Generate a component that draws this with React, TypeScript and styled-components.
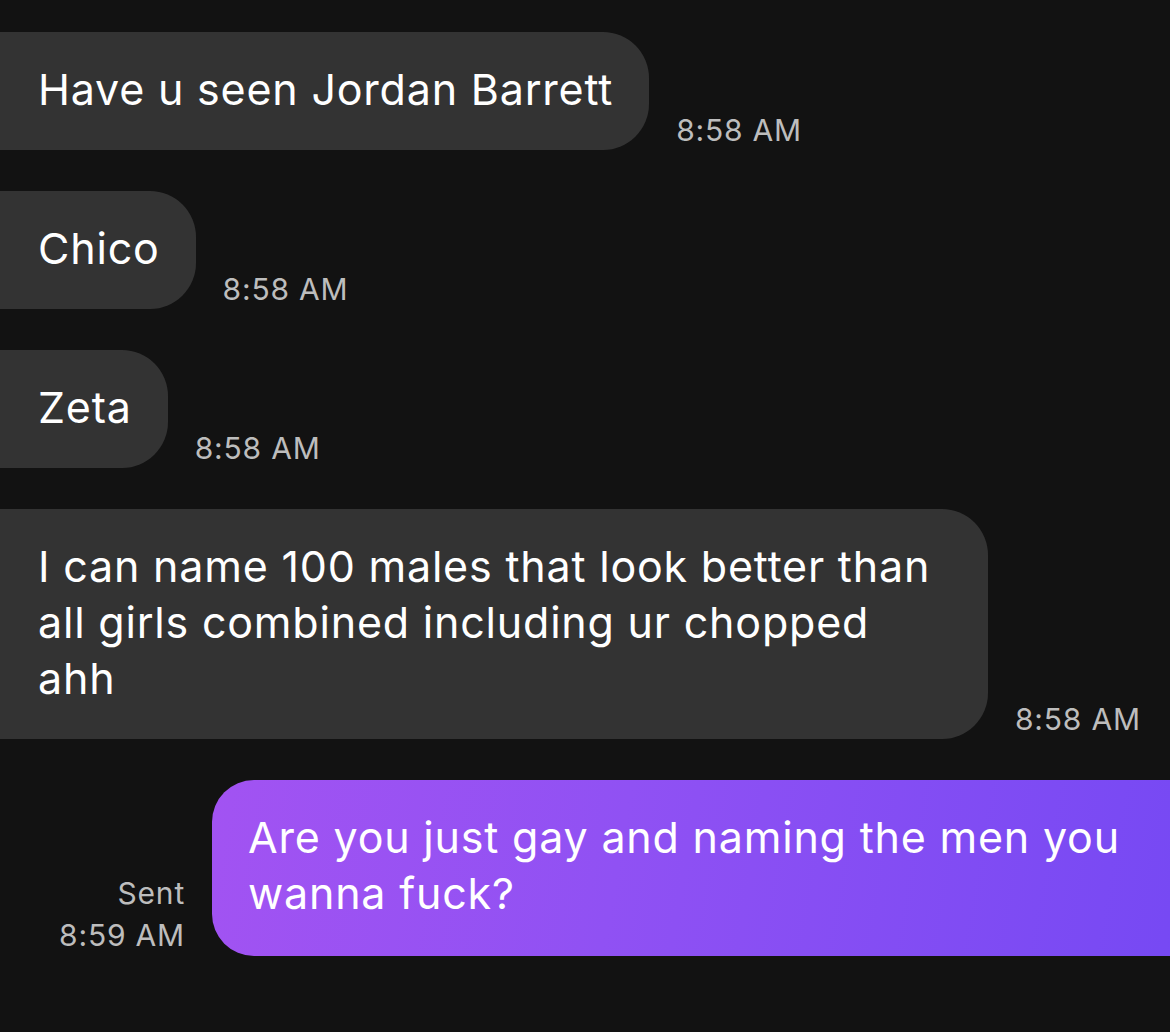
import { FunctionComponent } from "react";
import styled, { createGlobalStyle } from "styled-components";

const GlobalStyle = createGlobalStyle`
  html, body {
    margin: 0;
    padding: 0;
    background: #121212;
  }
  body {
    font-family: Inter, "Liberation Sans", sans-serif;
    overflow: hidden;
    -webkit-font-smoothing: antialiased;
  }
`;

interface Message {
  text: string;
  time: string;
  mine?: boolean;
}

const messages: Message[] = [
  { text: "Have u seen Jordan Barrett", time: "8:58 AM" },
  { text: "Chico", time: "8:58 AM" },
  { text: "Zeta", time: "8:58 AM" },
  {
    text: "I can name 100 males that look better than all girls combined including ur chopped ahh",
    time: "8:58 AM",
  },
  {
    text: "Are you just gay and naming the men you wanna fuck?",
    time: "8:59 AM",
    mine: true,
  },
];

const Thread = styled.div`
  display: flex;
  flex-direction: column;
  gap: 41px;
  padding-top: 32px;
  width: 1170px;
  height: 1032px;
  box-sizing: border-box;
  overflow: hidden;
`;

const Row = styled.div<{ $mine?: boolean }>`
  display: flex;
  align-items: flex-end;
  justify-content: ${(p) => (p.$mine ? "flex-end" : "flex-start")};
  gap: 27px;
`;

// bubbles run past the screen edge, so the hidden side gets a negative margin
const Bubble = styled.div<{ $mine?: boolean }>`
  box-sizing: border-box;
  color: #ffffff;
  font-size: 43px;
  line-height: 56px;
  letter-spacing: 0.8px;
  padding: 29px 36px 33px 98px;
  margin-left: -60px;
  max-width: 1048px;
  border-radius: 46px;
  background: #333333;

  ${(p) =>
    p.$mine &&
    `
    margin-left: 0;
    margin-right: -60px;
    padding: 29px 60px 35px 36px;
    max-width: 1018px;
    border-radius: 42px;
    background: linear-gradient(100deg, #a253f2 0%, #9051f3 40%, #7448f3 100%);
  `}
`;

const Stamp = styled.div`
  color: #bdbdbd;
  font-size: 30px;
  line-height: 34px;
  letter-spacing: 0.8px;
  margin-bottom: 3px;
  white-space: nowrap;
`;

const SentInfo = styled.div`
  display: flex;
  flex-direction: column;
  align-items: flex-end;
  color: #bdbdbd;
  font-size: 30px;
  line-height: 42px;
  letter-spacing: 0.8px;
`;

const MessageRow: FunctionComponent<{ message: Message }> = ({ message }) => {
  if (message.mine) {
    return (
      <Row $mine>
        <SentInfo>
          <span>Sent</span>
          <span>{message.time}</span>
        </SentInfo>
        <Bubble $mine>{message.text}</Bubble>
      </Row>
    );
  }
  return (
    <Row>
      <Bubble>{message.text}</Bubble>
      <Stamp>{message.time}</Stamp>
    </Row>
  );
};

const App: FunctionComponent = () => {
  return (
    <>
      <GlobalStyle />
      <Thread>
        {messages.map((m, idx) => (
          <MessageRow message={m} key={idx} />
        ))}
      </Thread>
    </>
  );
};

export default App;
